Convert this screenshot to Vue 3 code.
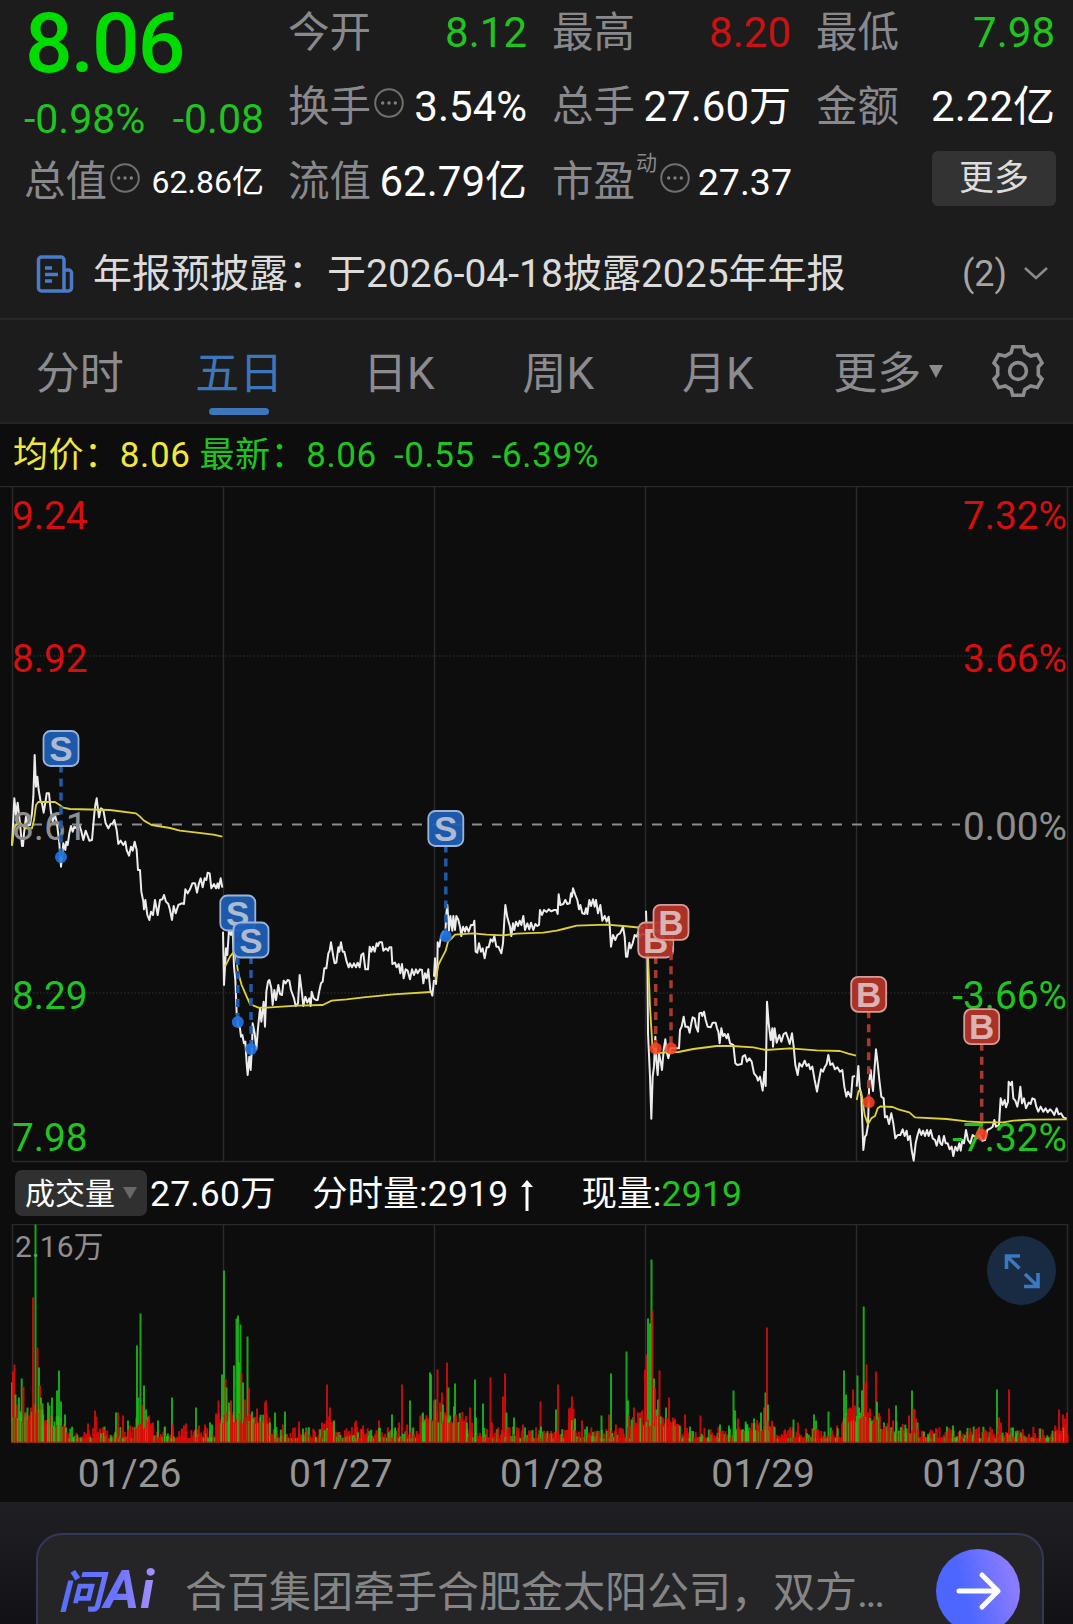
<template>
  <div class="page">
    <section class="quote">
      <div class="price-block">
        <div class="price">8.06</div>
        <div class="change">
          <span>-0.98%</span>
          <span>-0.08</span>
        </div>
      </div>
      <div v-for="item in stats" :key="item.label" class="stat" :class="item.size">
        <span class="stat-label">{{ item.label }}</span>
        <sup v-if="item.sup" class="stat-sup">{{ item.sup }}</sup>
        <svg v-if="item.tip" class="tip" viewBox="0 0 30 30">
          <circle cx="15" cy="15" r="13.8" />
          <circle class="tip-dot" cx="8.7" cy="15" r="1.7" />
          <circle class="tip-dot" cx="15" cy="15" r="1.7" />
          <circle class="tip-dot" cx="21.3" cy="15" r="1.7" />
        </svg>
        <span class="stat-value" :class="item.color">{{ item.value }}</span>
      </div>
      <div class="more-cell">
        <button class="more-btn">更多</button>
      </div>
    </section>

    <section class="news">
      <svg class="news-icon" viewBox="0 0 38 38">
        <path d="M5.5 2H25a3 3 0 0 1 3 3v31H5.5a3 3 0 0 1-3-3V5a3 3 0 0 1 3-3zM28 15h4.500a3 3 0 0 1 3 3v15a3 3 0 0 1-3 3H28" />
        <path d="M9 13h7M9 19.500h13M9 26h7" />
      </svg>
      <span class="news-text">年报预披露：于2026-04-18披露2025年年报</span>
      <span class="news-count">(2)</span>
      <svg class="news-arrow" viewBox="0 0 26 16"><path d="M2 2l11 10L24 2" /></svg>
    </section>

    <nav class="tabs">
      <div v-for="tab in tabs" :key="tab" class="tab" :class="{ active: tab === activeTab }" @click="activeTab = tab">
        {{ tab }}
        <i v-if="tab === '更多'" class="caret"></i>
      </div>
      <svg class="gear" viewBox="-27 -27 54 54">
        <path d="M-5.300-24.300H5.300L6.800-18.500L12.700-15L19.300-16.500L24-8L20.300-4V4L24 8L19.300 16.500L12.700 15L6.800 18.500L5.300 24.300H-5.300L-6.800 18.500L-12.700 15L-19.300 16.500L-24 8L-20.300 4V-4L-24-8L-19.300-16.500L-12.700-15L-6.800-18.500Z" />
        <circle r="8.400" />
      </svg>
    </nav>

    <div class="summary">
      <span class="yellow">均价：8.06</span>
      <span class="green latest">最新：8.06</span>
      <span class="green diff">-0.55</span>
      <span class="green diff">-6.39%</span>
    </div>

    <svg class="price-chart" viewBox="0 486 1073 678">
      <g class="grid">
        <path d="M0 486.500H1073M12 1161.500H1068" />
        <path v-for="x in gridX" :key="x" :d="`M${x} 486V1161`" />
        <path class="dotted" d="M12 656H1068M12 993H1068" />
      </g>
      <path class="zero-line" d="M12 824.600H960" />
      <g v-for="(day, i) in days" :key="i" :transform="`translate(${day.x} ${day.y}) scale(.33333)`">
        <polyline class="line-price" :points="day.price" />
        <polyline class="line-avg" :points="day.avg" />
      </g>
      <g class="axis">
        <text v-for="l in axisLabels" :key="l.left" x="12" :y="l.y" :class="l.color">{{ l.left }}</text>
        <text v-for="l in axisLabels" :key="l.right" x="1067" :y="l.y" :class="l.color" text-anchor="end">{{ l.right }}</text>
      </g>
      <g v-for="(m, i) in markers" :key="i" class="marker" :class="m.type === 'S' ? 'sell' : 'buy'">
        <path class="stem" :d="`M${m.x} ${m.y + 18}V${m.dot}`" />
        <circle :cx="m.x" :cy="m.dot" r="6" />
        <rect :x="m.x - 17.500" :y="m.y - 17.500" width="35" height="35" rx="7" />
        <text :x="m.x" :y="m.y + 12.500" text-anchor="middle">{{ m.type }}</text>
      </g>
    </svg>

    <div class="volume-head">
      <button class="volume-btn"><span>成交量</span><i class="caret"></i></button>
      <span class="vol-item vol-total">27.60万</span>
      <span class="vol-item vol-minute">分时量:2919</span>
      <svg class="up" viewBox="0 0 12 32"><path d="M6 31V5" /><path class="head" d="M6 0l6 7H0z" /></svg>
      <span class="vol-item vol-now">现量:<span class="green">2919</span></span>
    </div>

    <div class="volume-wrap">
      <svg class="volume-chart" viewBox="0 1224 1073 219">
        <g class="grid">
          <path d="M12 1224.500H1068" />
          <path v-for="x in gridX" :key="x" :d="`M${x} 1224V1443`" />
        </g>
        <text class="vol-max" x="15" y="1256.500">2.16万</text>
        <rect
          v-for="(b, i) in bars"
          :key="i"
          :class="b.up ? 'bar-up' : 'bar-down'"
          :x="b.x - 1"
          :y="1442.500 - b.h"
          width="2"
          :height="b.h"
        />
        <path class="vol-base" d="M12 1442.300H1068" />
      </svg>
      <button class="expand">
        <svg viewBox="0 0 69 69">
          <path d="M33 20H19.500V33M20 20.500L32.500 32.500M37 50.500H51V37M50.500 50L38 38" />
        </svg>
      </button>
    </div>

    <div class="dates">
      <span v-for="d in dates" :key="d">{{ d }}</span>
    </div>

    <footer class="ask">
      <div class="ask-card">
        <span class="ask-logo"><span class="ask-wen">问</span>Ai</span>
        <span class="ask-text">合百集团牵手合肥金太阳公司，双方<span class="dots">...</span></span>
        <button class="ask-go">
          <svg viewBox="0 0 84 84"><path d="M23 42H62M46 26L62 42L46 58" /></svg>
        </button>
      </div>
    </footer>
  </div>
</template>

<script setup>
import { ref } from 'vue'

const stats = [
  { label: '今开', value: '8.12', color: 'green' },
  { label: '最高', value: '8.20', color: 'red' },
  { label: '最低', value: '7.98', color: 'green' },
  { label: '换手', value: '3.54%', tip: true },
  { label: '总手', value: '27.60万' },
  { label: '金额', value: '2.22亿' },
  { label: '总值', value: '62.86亿', tip: true, size: 'small' },
  { label: '流值', value: '62.79亿' },
  { label: '市盈', value: '27.37', tip: true, sup: '动', size: 'medium' },
]

const tabs = ['分时', '五日', '日K', '周K', '月K', '更多']
const activeTab = ref('五日')

const gridX = [12.5, 223.5, 434.5, 645.5, 856.5, 1067.5]
const dates = ['01/26', '01/27', '01/28', '01/29', '01/30']

const axisLabels = [
  { left: '9.24', right: '7.32%', y: 529, color: 'red' },
  { left: '8.92', right: '3.66%', y: 672, color: 'red' },
  { left: '8.61', right: '0.00%', y: 839.5, color: 'grey' },
  { left: '8.29', right: '-3.66%', y: 1008.5, color: 'green' },
  { left: '7.98', right: '-7.32%', y: 1150.5, color: 'green' },
]

const markers = [
  { type: 'S', x: 61, y: 748.5, dot: 857 },
  { type: 'S', x: 237.8, y: 913, dot: 1022 },
  { type: 'S', x: 251, y: 940, dot: 1049 },
  { type: 'S', x: 445.8, y: 828.5, dot: 936.3 },
  { type: 'B', x: 655.7, y: 940, dot: 1048.5 },
  { type: 'B', x: 671, y: 922.3, dot: 1048.5 },
  { type: 'B', x: 868.7, y: 994.3, dot: 1102.3 },
  { type: 'B', x: 981.7, y: 1026.7, dot: 1134.7 },
]

// one entry per trading day, points are in thirds of a pixel from x / y
const days = [
  {
    x: 0,
    y: 700,
    price:
      '36,437 43,295 48,345 53,308 60,370 66,438 69,438 72,400 78,350 84,375 90,375 96,340 100,290 104,165 108,260 112,230 116,270 122,305 126,310 131,338 138,295 140,280 147,280 152,330 158,365 165,345 171,370 178,430 183,500 190,430 196,450 199,425 203,435 208,400 213,378 218,395 223,380 230,385 238,375 243,390 250,420 257,392 262,405 268,422 276,420 283,340 286,315 290,295 297,352 303,325 310,330 317,370 325,385 332,372 338,370 343,360 350,390 355,432 362,422 370,435 376,425 380,450 387,467 393,440 398,452 404,425 410,450 414,510 420,510 424,575 430,605 432,628 436,600 442,645 448,660 453,635 459,645 465,600 473,645 480,600 487,598 492,585 498,605 505,612 510,630 516,660 521,618 527,640 535,615 545,610 552,612 556,568 563,580 570,568 577,550 585,550 591,578 597,550 602,535 608,562 614,535 619,540 623,518 629,520 634,565 642,552 648,565 653,550 656,565 662,535 667,563',
    avg: '36,437 42,385 50,372 58,365 66,375 76,385 96,385 102,360 108,315 115,306 165,306 178,314 190,323 210,327 330,330 408,340 420,350 432,362 455,375 510,384 540,392 610,400 640,404 667,410',
  },
  {
    x: 220,
    y: 780,
    price:
      '9,455 12,615 18,505 22,525 27,450 33,465 38,450 42,560 46,600 50,700 54,735 60,745 63,770 67,765 72,790 76,785 80,850 83,885 88,830 92,870 96,800 98,730 104,760 109,808 114,745 120,685 124,725 131,665 135,740 139,635 144,605 148,600 154,625 158,675 163,630 168,660 175,615 180,642 186,645 191,602 197,610 203,600 208,602 213,630 222,655 227,678 234,670 239,585 246,640 250,678 256,650 262,668 268,655 272,678 275,635 281,655 288,660 293,660 298,632 303,610 308,605 313,565 319,565 325,520 329,512 333,487 340,530 344,550 349,548 355,502 358,515 363,487 368,515 373,515 380,545 386,562 390,550 396,562 402,550 408,562 413,548 419,562 424,525 430,520 436,568 444,568 449,500 454,515 459,500 464,515 470,490 474,498 478,487 486,487 490,512 498,505 504,512 508,502 514,502 517,552 525,548 530,562 536,552 541,580 546,552 551,595 557,568 563,572 570,598 576,568 582,585 588,568 593,580 600,568 606,570 610,610 615,580 620,595 625,568 631,630 637,647 642,600',
    avg: '15,560 30,530 40,518 47,530 55,580 65,615 80,650 90,672 115,683 140,683 230,677 308,675 335,662 380,658 430,652 520,643 632,636',
  },
  {
    x: 420,
    y: 780,
    price:
      '42,590 45,535 48,612 52,560 53,487 58,500 63,470 70,455 76,458 79,400 82,375 87,452 91,408 97,452 100,408 105,450 109,408 115,420 120,440 124,468 129,440 135,455 139,440 146,455 153,435 160,435 163,422 167,515 172,518 177,490 183,515 188,505 194,535 200,502 206,502 212,478 218,485 223,468 229,500 235,500 244,520 249,490 253,420 256,375 262,412 270,440 274,468 279,430 283,450 288,425 294,438 299,422 304,435 310,408 315,450 322,430 328,448 333,428 340,450 346,432 352,438 357,435 360,390 366,405 372,390 380,396 386,388 394,394 402,390 409,390 413,402 416,343 421,375 430,372 436,360 442,372 449,370 453,340 456,350 459,325 466,345 472,360 477,388 481,375 487,400 494,402 498,385 502,402 508,360 513,378 519,358 524,380 528,360 534,400 541,375 547,422 554,408 560,425 566,410 569,435 573,500 579,465 586,480 592,465 600,460 605,450 609,440 614,470 618,530 622,530 628,488 632,505 638,490 644,465 650,470 655,455 660,470 668,460 675,465',
    avg: '47,600 55,555 65,535 77,512 84,485 95,475 105,464 160,460 200,464 250,466 290,461 370,458 410,452 430,447 470,437 560,434 610,438 670,444',
  },
  {
    x: 640,
    y: 880,
    price:
      '18,92 22,220 24,460 30,590 34,716 38,590 42,560 46,470 49,540 53,585 57,520 62,545 66,570 71,510 76,478 80,515 85,535 92,505 117,505 120,450 125,440 131,410 136,440 144,440 149,458 154,430 158,412 164,415 168,440 174,455 178,400 184,398 187,408 192,395 197,420 203,440 212,442 218,428 227,428 231,445 235,455 239,490 244,445 249,468 254,462 260,475 264,462 270,490 280,495 286,550 292,555 305,552 308,530 315,525 321,545 328,535 335,545 342,580 350,590 354,602 360,590 368,632 373,575 377,618 381,365 386,430 392,480 397,445 399,500 404,445 410,488 418,465 424,485 431,462 438,458 444,475 449,492 456,460 461,500 466,555 473,585 478,550 486,560 494,542 500,558 506,552 511,568 517,560 524,600 531,635 537,600 543,568 549,575 555,560 560,552 565,525 571,555 578,550 585,568 592,562 600,575 607,570 613,620 619,650 624,635 633,652 638,590 645,588',
    avg: '20,140 24,230 30,380 37,495 46,520 70,518 115,516 160,507 230,498 275,498 340,502 378,510 450,505 530,511 600,513 625,521 648,527',
  },
  {
    x: 640,
    y: 880,
    price:
      '650,620 655,558 659,620 664,650 670,810 675,770 679,765 684,735 688,600 692,570 695,600 699,633 704,560 708,508 713,550 718,600 724,650 731,655 735,712 741,708 747,732 754,700 760,730 766,775 773,765 781,765 788,748 794,768 800,752 804,780 810,768 815,810 821,842 827,790 832,768 838,748 844,765 849,752 855,768 861,750 866,768 872,750 878,775 885,780 890,797 897,768 901,790 906,795 912,768 917,790 923,790 929,808 935,800 940,828 946,800 952,812 958,790 962,812 967,780 972,790 978,750 984,780 991,790 998,765 1010,775 1018,765 1027,782 1035,780 1042,750 1052,745 1058,740 1063,720 1068,740 1077,735 1082,655 1088,675 1094,660 1098,682 1104,665 1106,605 1112,615 1116,605 1120,655 1126,662 1132,680 1137,655 1141,620 1146,670 1152,655 1158,685 1166,668 1172,672 1177,655 1184,658 1189,680 1195,695 1202,680 1210,695 1217,685 1223,697 1230,688 1237,695 1243,705 1250,685 1256,703 1263,700 1270,712 1280,716',
    avg: '650,660 656,632 663,635 668,660 674,705 684,733 694,715 705,708 713,685 722,679 758,681 775,688 808,697 825,712 920,717 980,724 1030,727 1090,727 1120,722 1170,719 1280,718',
  },
]

// x, height, direction of the larger trades
const peaks =
  '12 60g,13 71r,14.5 78r,15.5 48g,17 38r,19 45g,21.7 64g,23.5 56r,25.5 30g,27.5 35g,31 35r,33 145r,35.5 218g,37.5 95r,39 75g,40 57r,41 45g,42.5 39g,45 20r,48 40g,49.5 37g,52 45g,57 52g,59 72g,61 41g,65 28g,88 19r,95 32r,96.5 26r,105 13r,116 30g,118 30r,123 27r,128 22g,130 17r,135 15g,137 97g,138.5 45g,140.5 129g,142 38r,144 57g,146 33g,148 26g,149 27r,153 20r,158 22g,165 16g,172 45g,173 18r,182 14r,184 17r,186 19r,196 35g,199 17r,205 18r,210 20g,212 18g,216 29r,218.5 42r,222 68g,224 172g,225.5 64r,226.5 55g,229 40g,231 42r,234 77g,236.5 124g,238 127g,239 80g,240.5 118g,241.5 70r,243 60g,245 43r,247.5 106g,249 55r,252 31g,254 24g,257 34r,260 25r,265 40r,266 42r,270 20g,275 30g,283 18r,285 31g,299 21r,303 14g,322 20r,324 19r,327 58r,329 26r,330 35r,332 20r,334 22g,355 20r,356 22r,363 17r,379 22r,392 28g,395 15g,399 20r,402 58r,407 18r,410 42g,423 30g,425 22g,430 70g,431 68g,434 42r,435.5 43g,437.5 73r,440 40r,442 50r,443 38g,445 30r,447 80r,448.5 55g,450 27g,454 36g,455 59g,456 28r,460 24r,467 20g,470 35r,472 20r,475 63g,476 25g,483 39g,490.5 65r,492 20r,503 46r,505 69r,506.5 30g,514 25g,523 18r,525 15g,540.5 41r,541 16g,556 33g,558 58r,569 34r,570.5 35r,572 46r,573.5 34r,575 24g,582 22r,601.5 27g,609 28r,611 69g,616 18r,626.5 91g,628 42g,629 27r,634 35r,638 30r,640 30r,642 32r,645 73r,646.5 88r,648 124g,650 119g,651.5 183g,652.5 132r,654 64g,655 55r,656.5 33g,658 43g,659.5 72r,661 26g,666 35g,669 45r,671 20r,675 24r,678 14r,685 28r,690 16g,700.5 27r,720 18g,729 17g,733.5 52g,735 32g,738 24r,746 15g,754 24g,758 18r,761 30g,764 35r,765.5 50g,767 115r,768 38g,770 16g,785 13r,793.5 23g,798 20r,806 14r,814 28g,816 22g,818 13r,828.5 31g,837 17r,844 72g,846 48g,848 34r,850 35r,851.5 34r,853 53r,855 37r,857.5 67g,859 35g,860.5 30g,862 52g,863.7 136g,865 60r,866.5 78r,868 30r,870 34r,872 22g,876 71r,877 41g,879 25g,884 20g,889 34r,893 22r,896 37g,909 27r,912 52g,913.5 34r,914.7 33r,916 24r,918 14r,924 11g,947 16g,953 17g,960 12g,977 14r,979 9r,997 53g,999 25r,1001 20r,1009 53r,1013 15g,1021 10g,1055 11r,1059 33r,1061 12r,1063 28r,1065 24r,1067 30r'

// busy stretches raise the floor of the small bars: from, to, floor
const busy = [
  [12, 32, 20], [32, 44, 28], [44, 66, 15], [135, 152, 13], [216, 270, 19], [324, 334, 11], [420, 466, 19],
  [566, 576, 12], [630, 680, 16], [735, 775, 11], [842, 880, 18], [880, 918, 9], [1055, 1068, 7],
]

let seed = 26
function random() {
  seed = (seed * 16807) % 2147483647
  return seed / 2147483647
}

const bars = []
for (let x = 12.5; x < 1068; x += 0.877) {
  const zone = busy.find((z) => x >= z[0] && x < z[1])
  const h = (zone ? zone[2] : 4) + Math.pow(random(), 2) * 12
  bars.push({ x, h, up: random() < 0.7 })
}
for (const p of peaks.split(',')) {
  const [x, v] = p.split(' ')
  bars.push({ x: Number(x), h: parseFloat(v), up: v.endsWith('r') })
}
bars.sort((a, b) => a.x - b.x)
</script>

<style>
body {
  margin: 0;
  background: #0d0d0d;
}
</style>

<style scoped>
.page {
  width: 1073px;
  height: 1624px;
  overflow: hidden;
  background: #0d0d0d;
  color: #fff;
  font-family: Roboto, "Noto Sans CJK SC", sans-serif;
  white-space: nowrap;
}

button {
  border: 0;
  padding: 0;
  font-family: inherit;
}

svg {
  display: block;
  fill: none;
}

.green { color: #20c420; fill: #20c420; }
.red { color: #cb1212; fill: #d60e0e; }
.yellow { color: #f3e63c; }
.grey { fill: #8e8e8e; }

.quote {
  height: 229px;
  padding: 0 17px 0 24px;
  box-sizing: border-box;
  background: #1c1c1c;
  display: grid;
  grid-template-columns: repeat(4, 240px);
  grid-template-rows: 66px 81px 69px;
  column-gap: 24px;
}

.price-block {
  grid-row: span 2;
}

.price {
  height: 87px;
  line-height: 88px;
  padding-left: 1px;
  font-size: 84px;
  font-weight: 500;
  letter-spacing: -2px;
  color: #00dc00;
}

.change {
  height: 64px;
  line-height: 64px;
  display: flex;
  justify-content: space-between;
  font-size: 41px;
  color: #20c420;
}

.stat {
  display: flex;
  align-items: center;
  font-size: 42px;
  line-height: 64px;
}

.stat-label {
  font-size: 41.500px;
  color: #89898d;
}

.stat-value {
  margin-left: auto;
  padding-right: 1px;
}

.small .stat-value { font-size: 32px; padding-right: 0; }
.medium .stat-value { font-size: 37.500px; padding-right: 0; }

.stat-sup {
  align-self: flex-start;
  margin: 6px 0 0 1px;
  font-size: 21px;
  line-height: 21px;
  color: #89898d;
}

.tip {
  width: 30px;
  height: 30px;
  margin: -8px 0 0 2.500px;
  stroke: #707070;
  stroke-width: 2;
}

.tip-dot {
  stroke: none;
  fill: #808080;
}

.more-cell {
  display: flex;
  align-items: center;
  justify-content: flex-end;
}

.more-btn {
  width: 124px;
  height: 55px;
  margin-bottom: 6px;
  border-radius: 6px;
  background: #333;
  color: #ddd;
  font-size: 35px;
  line-height: 55px;
}

.news {
  height: 91px;
  box-sizing: border-box;
  padding: 0 24px 0 36px;
  border-bottom: 2px solid #272727;
  background: #1c1c1c;
  display: flex;
  align-items: center;
  font-size: 39px;
  color: #dcdcdc;
}

.news-icon {
  width: 38px;
  height: 38px;
  margin-right: 19px;
  stroke: #4a7bcb;
  stroke-width: 3.5;
}

.news-text {
  margin-top: -7px;
}

.news-count {
  margin-left: auto;
  margin-right: 16px;
  font-size: 36px;
  color: #a5a5a5;
}

.news-arrow {
  width: 26px;
  height: 16px;
  stroke: #8a8a8a;
  stroke-width: 2.6;
}

.tabs {
  height: 104px;
  box-sizing: border-box;
  border-bottom: 2px solid #252525;
  background: #1c1c1c;
  display: flex;
  align-items: center;
}

.tab {
  position: relative;
  width: 159.500px;
  height: 102px;
  line-height: 109px;
  text-align: center;
  font-size: 44px;
  color: #8b8b90;
}

.active {
  color: #3d76ba;
}

.active::after {
  content: "";
  position: absolute;
  left: 50%;
  bottom: 7px;
  width: 60px;
  height: 7px;
  margin-left: -30px;
  border-radius: 4px;
  background: #3d76ba;
}

.tab .caret {
  position: absolute;
  left: 131px;
  top: 45px;
  border: 7.500px solid transparent;
  border-top: 13px solid #8b8b90;
  border-bottom: 0;
}

.gear {
  width: 54px;
  height: 54px;
  margin-left: 34px;
  stroke: #8b8b90;
  stroke-width: 3.6;
}

.summary {
  height: 62px;
  padding-left: 13px;
  display: flex;
  align-items: baseline;
  font-size: 35px;
  line-height: 64px;
  letter-spacing: 0.6px;
}

.latest {
  margin-left: 9px;
}

.diff {
  margin-left: 17px;
}

.price-chart {
  width: 1073px;
  height: 678px;
}

.grid path {
  stroke: #2a2a2a;
  stroke-width: 1.5;
}

.grid .dotted {
  stroke: #272727;
  stroke-dasharray: 1.500 2;
}

.zero-line {
  stroke: #8c8c8c;
  stroke-width: 2;
  stroke-dasharray: 10 10;
}

.line-price {
  stroke: #ececec;
  stroke-width: 6;
  stroke-linejoin: round;
}

.line-avg {
  stroke: #ddd138;
  stroke-width: 5.5;
  stroke-linejoin: round;
}

.axis text {
  font-size: 38.800px;
}

.marker text {
  font-family: "Liberation Sans", sans-serif;
  font-size: 35px;
  font-weight: 700;
  fill: #aebad2;
}

.marker rect {
  stroke-width: 1.8;
  fill-opacity: 0.92;
}

.stem {
  stroke-width: 3.5;
  stroke-dasharray: 8 6;
  stroke-dashoffset: 2;
}

.sell rect { fill: #1d5fb8; stroke: #9cb3d6; }
.sell circle { fill: #2275e6; fill-opacity: 0.9; }
.sell .stem { stroke: #1e5aa8; }
.buy rect { fill: #b73428; stroke: #d59d99; }
.buy circle { fill: #ff4428; fill-opacity: 0.85; }
.buy .stem { stroke: #a8392c; }
.buy text { fill: #dab4b3; }

.volume-head {
  height: 60px;
  padding-left: 15px;
  display: flex;
  align-items: center;
  font-size: 35.500px;
  letter-spacing: 0.2px;
}

.volume-btn {
  width: 132px;
  height: 46px;
  margin-top: -2px;
  border-radius: 7px;
  background: #303030;
  color: #fff;
  font-size: 30px;
  display: flex;
  align-items: center;
  padding-left: 10px;
  box-sizing: border-box;
}

.volume-btn span {
  margin-top: -4px;
}

.volume-btn .caret {
  margin-left: 8px;
  border: 7.500px solid transparent;
  border-top: 12px solid #686868;
  border-bottom: 0;
}

.vol-item {
  margin-top: -7px;
}

.vol-total {
  margin-left: 3px;
}

.vol-minute {
  margin-left: 36px;
}

.up {
  width: 12px;
  height: 32px;
  margin: 3px 0 0 13px;
  stroke: #fff;
  stroke-width: 3;
}

.up .head {
  stroke: none;
  fill: #fff;
}

.vol-now {
  margin-left: 48px;
}

.volume-wrap {
  position: relative;
}

.volume-chart {
  width: 1073px;
  height: 219px;
}

.vol-max {
  font-size: 30px;
  fill: #8e8e8e;
}

.bar-up { fill: #dc0c0a; fill-opacity: 0.87; }
.bar-down { fill: #1ac81a; fill-opacity: 0.82; }

.vol-base {
  stroke: #8a2a08;
  stroke-width: 1;
}

.expand {
  position: absolute;
  left: 987px;
  top: 12px;
  width: 69px;
  height: 69px;
  border-radius: 50%;
  background: #192b43;
}

.expand svg {
  stroke: #3c78c2;
  stroke-width: 3.6;
}

.dates {
  height: 59px;
  padding: 3px 0 0 24px;
  box-sizing: border-box;
  display: flex;
  align-items: center;
  overflow: hidden;
  font-size: 39px;
  color: #969696;
}

.dates span {
  flex: none;
  width: 211.200px;
  text-align: center;
}

.ask {
  height: 122px;
  padding: 31px 29px 0 36px;
  box-sizing: border-box;
  background: linear-gradient(#1f1f24, #121216);
}

.ask-card {
  height: 115px;
  box-sizing: border-box;
  padding: 0 22px 0 20px;
  border: 2.500px solid #343858;
  border-radius: 26px;
  background: #252527;
  display: flex;
  align-items: center;
}

.ask-logo {
  width: 108px;
  margin-top: 1px;
  font-size: 54px;
  line-height: 60px;
  font-weight: 700;
  font-style: italic;
  letter-spacing: 1px;
  background: linear-gradient(90deg, #5470ff, #6d72ff 55%, #b49af8);
  background-clip: text;
  color: transparent;
}

.ask-wen {
  font-size: 45px;
}

.ask-text {
  margin-top: -4px;
  margin-left: 19px;
  font-size: 42px;
  color: #858585;
}

.dots {
  letter-spacing: -2.500px;
}

.ask-go {
  width: 84px;
  height: 84px;
  margin-left: auto;
  border-radius: 50%;
  background: linear-gradient(75deg, #4c66ff 35%, #8a7cff 85%);
}

.ask-go svg {
  stroke: #fff;
  stroke-width: 5;
  stroke-linecap: round;
  stroke-linejoin: round;
}
</style>
